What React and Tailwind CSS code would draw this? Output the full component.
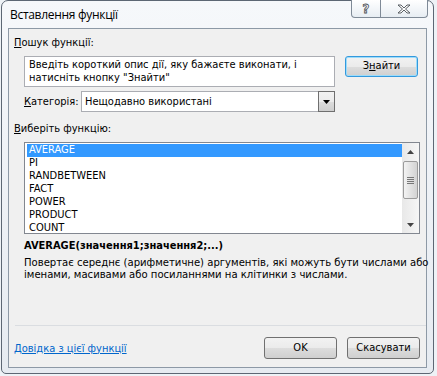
export default function App() {
    const items = ["AVERAGE", "PI", "RANDBETWEEN", "FACT", "POWER", "PRODUCT", "COUNT"];

    const btn = "flex items-center justify-center rounded-[3px] border border-[#707070] bg-[linear-gradient(#f2f2f2_0%,#ebebeb_50%,#dddddd_51%,#cfcfcf_100%)] text-[11px] text-black";

    return (
        <div className="w-[437px] h-[376px] bg-[#eef2f6] flex pl-[1px] overflow-hidden font-['DejaVu_Sans_Condensed','DejaVu_Sans',sans-serif]">
            {/* вікно */}
            <div className="w-[433px] h-[374px] shrink-0 border border-[#5d6774] rounded-t-[7px] rounded-b-[5px] bg-[linear-gradient(#f6f8fb,#e6ebf1)] flex flex-col">
                {/* заголовок */}
                <div className="h-[27px] flex items-start justify-between pl-[8px] pr-[5px] shrink-0">
                    <div className="pt-[6px] text-[12px] leading-[15px] text-black font-['Open_Sans',sans-serif] tracking-[-0.3px]">Вставлення функції</div>
                    <div className="flex h-[18px] -mt-px border border-t-0 border-[#7f8a97] rounded-b-[4px] bg-[linear-gradient(#ffffff,#e7edf3)] overflow-hidden">
                        <div className="w-[29px] flex items-center justify-center border-r border-[#7f8a97] text-[13px] font-bold text-white [-webkit-text-stroke:0.8px_#4a4f55]">?</div>
                        <div className="w-[46px] flex items-center justify-center">
                            <svg width="14" height="10" viewBox="0 0 14 10">
                                <path d="M1 1h3l3 3 3-3h3l-4.5 4 4.5 4h-3l-3-3-3 3h-3l4.5-4z" fill="#ffffff" stroke="#4a4f55" strokeWidth="0.9" />
                            </svg>
                        </div>
                    </div>
                </div>

                {/* клієнтська область */}
                <div className="flex-1 ml-[6px] mr-[6px] mb-[5px] border border-[#8d99a6] bg-[#f0f0f0] flex flex-col text-[11px] text-black">
                    <div className="mt-[6px] pl-[5px] leading-[15px]"><span className="underline">П</span>ошук функції:</div>

                    <div className="mt-[6px] pl-[15px] pr-[6px] flex items-start gap-[10px]">
                        <div className="w-[311px] h-[31px] bg-white border border-[#abadb3] px-[4px] pt-[1px] leading-[13px]">
                            Введіть короткий опис дії, яку бажаєте виконати, і<br />натисніть кнопку "Знайти"
                        </div>
                        <div className="w-[73px] h-[21px] flex items-center justify-center rounded-[3px] border border-[#3399dd] bg-[linear-gradient(#f2f2f2_0%,#ebebeb_50%,#dddddd_51%,#cfcfcf_100%)] shadow-[inset_0_0_0_1px_#9ddcfa]">
                            З<span className="underline">н</span>айти
                        </div>
                    </div>

                    <div className="mt-[4px] pl-[15px] flex items-center">
                        <div className="w-[57px] leading-[15px]"><span className="underline">К</span>атегорія:</div>
                        <div className="w-[254px] h-[21px] flex bg-white border border-[#abadb3]">
                            <div className="flex-1 pl-[3px] leading-[19px]">Нещодавно використані</div>
                            <div className="w-[17px] -my-px -mr-px border border-[#6f6f6f] bg-[linear-gradient(#f2f2f2_0%,#ebebeb_50%,#dddddd_51%,#cfcfcf_100%)] flex items-center justify-center">
                                <svg width="7" height="4" viewBox="0 0 7 4"><path d="M0 0h7L3.5 4z" fill="#000" /></svg>
                            </div>
                        </div>
                    </div>

                    <div className="mt-[9px] pl-[5px] leading-[15px]"><span className="underline">В</span>иберіть функцію:</div>

                    {/* список функцій */}
                    <div className="mt-[6px] ml-[15px] mr-[6px] h-[92px] border border-[#828790] bg-white flex overflow-hidden">
                        <div className="flex-1 pl-[2px] pt-[1px]">
                            {items.map((it, i) => (
                                <div
                                    key={it}
                                    className={i === 0 ? "h-[13px] leading-[12px] pl-[2px] bg-[#3399ff] text-white" : "h-[13px] leading-[12px] pl-[2px]"}
                                >
                                    {it}
                                </div>
                            ))}
                        </div>
                        <div className="w-[17px] bg-[linear-gradient(90deg,#e8e8e8,#f6f6f6)] flex flex-col items-center">
                            <div className="h-[17px] flex items-center justify-center">
                                <svg width="7" height="4" viewBox="0 0 7 4"><path d="M3.5 0L7 4H0z" fill="#444" /></svg>
                            </div>
                            <div className="w-[15px] h-[38px] mt-px rounded-[2px] border border-[#9b9b9b] bg-[linear-gradient(90deg,#f3f3f3,#e2e2e2_50%,#d3d3d3)] flex flex-col items-center justify-center gap-[1px]">
                                <div className="w-[7px] h-px bg-[#777]"></div>
                                <div className="w-[7px] h-px bg-[#777]"></div>
                                <div className="w-[7px] h-px bg-[#777]"></div>
                                <div className="w-[7px] h-px bg-[#777]"></div>
                            </div>
                            <div className="flex-1"></div>
                            <div className="h-[17px] flex items-center justify-center">
                                <svg width="7" height="4" viewBox="0 0 7 4"><path d="M0 0h7L3.5 4z" fill="#444" /></svg>
                            </div>
                        </div>
                    </div>

                    <div className="mt-[5px] pl-[15px] font-bold leading-[14px]">AVERAGE(значення1;значення2;...)</div>
                    <div className="mt-[4px] pl-[15px] leading-[12px] whitespace-nowrap text-[11.2px]">
                        Повертає середнє (арифметичне) аргументів, які можуть бути числами або<br />іменами, масивами або посиланнями на клітинки з числами.
                    </div>

                    <div className="flex-1"></div>
                    <div className="ml-[6px] h-px bg-[#dadde1]"></div>

                    <div className="mt-[11px] mb-[8px] pl-[5px] pr-[6px] flex items-center">
                        <div className="flex-1 text-[#0066cc] underline leading-[15px]">Довідка з цієї функції</div>
                        <div className={btn + " w-[73px] h-[22px]"}>OK</div>
                        <div className={btn + " w-[73px] h-[22px] ml-[10px]"}>Скасувати</div>
                    </div>
                </div>
            </div>
        </div>
    );
}
